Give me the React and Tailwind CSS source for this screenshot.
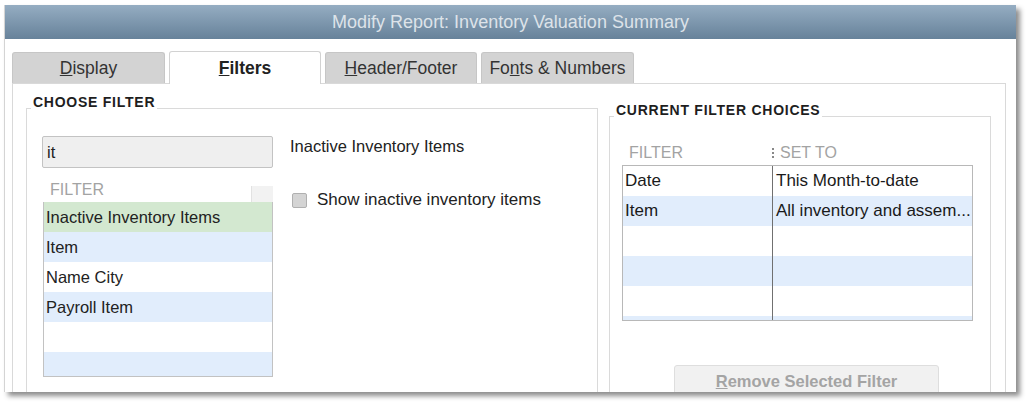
import React from "react";

const font = { fontFamily: '"Liberation Sans", Arial, sans-serif' };

function Tab({ children, active, w }) {
  if (active) {
    return (
      <div
        className={`${w} h-[33px] -mb-px mt-[-1px] bg-white border border-b-0 border-[#d2d2d2] rounded-t-[3px] flex items-center justify-center text-[17.5px] font-bold text-[#222] relative z-10`}
      >
        {children}
      </div>
    );
  }
  return (
    <div
      className={`${w} h-[31px] bg-[#d3d3d3] border border-b-0 border-[#c6c6c6] rounded-t-[3px] flex items-center justify-center text-[17.5px] text-[#333]`}
    >
      {children}
    </div>
  );
}

function GroupLabel({ children }) {
  return (
    <div className="absolute left-[4px] top-[-15px] px-[2px] bg-white text-[14px] leading-[16px] font-bold tracking-[0.75px] text-[#1e1e1e]">
      {children}
    </div>
  );
}

export default function App() {
  const filterRows = [
    { name: "Inactive Inventory Items", bg: "bg-[#d3e8d0]" },
    { name: "Item", bg: "bg-[#e1edfc]" },
    { name: "Name City", bg: "bg-white" },
    { name: "Payroll Item", bg: "bg-[#e1edfc]" },
    { name: "", bg: "bg-white" },
    { name: "", bg: "bg-[#e1edfc]" },
  ];

  const choices = [
    ["Date", "This Month-to-date"],
    ["Item", "All inventory and assem..."],
    ["", ""],
    ["", ""],
    ["", ""],
  ];

  return (
    <div className="w-[1027px] h-[404px] bg-white pt-[5px] pl-[4px]" style={font}>
      <div className="w-[1012px] h-[387px] overflow-hidden flex flex-col bg-white border-l border-[#d4d4d4] shadow-[4px_4px_5px_rgba(0,0,0,0.45)]">
        {/* title bar */}
        <div className="h-[34px] shrink-0 flex items-center justify-center bg-gradient-to-b from-[#95adc2] to-[#67829a] text-[18px] text-[#dde3e9]">
          Modify Report: Inventory Valuation Summary
        </div>

        <div className="flex-1 pl-[7px] pr-[10px] pt-[13px] flex flex-col">
          {/* tabs */}
          <div className="flex gap-[4px] items-end">
            <Tab w="w-[153px]">
              <span><u>D</u>isplay</span>
            </Tab>
            <Tab w="w-[152px]" active>
              <span><u>F</u>ilters</span>
            </Tab>
            <Tab w="w-[152px]">
              <span><u>H</u>eader/Footer</span>
            </Tab>
            <Tab w="w-[153px]">
              <span>Fo<u>n</u>ts &amp; Numbers</span>
            </Tab>
          </div>

          {/* panel */}
          <div className="border border-[#d9d9d9] h-[400px] flex items-start pl-[13px] pr-[13px] gap-[11px]">
            {/* choose filter */}
            <div className="relative mt-[24px] w-[572px] h-[400px] border border-[#dadada] pt-[27px] pl-[15px] flex gap-[17px]">
              <GroupLabel>CHOOSE FILTER</GroupLabel>
              <div className="w-[231px] flex flex-col">
                <div className="h-[32px] bg-[#efefef] border border-[#c3c3c3] rounded-[2px] flex items-center px-[4px] text-[16.5px] text-[#222]">
                  it
                </div>
                <div className="mt-[9px] h-[25px] flex items-end relative">
                  <span className="pl-[8px] pb-[1px] text-[16px] text-[#a3a3a3] leading-[22px]">
                    FILTER
                  </span>
                  <div className="ml-auto w-[22px] h-[16px] bg-[#f2f2f2] border-l border-[#e2e2e2]"></div>
                </div>
                <div className="border border-[#c2c2c2] border-t-0 flex flex-col ml-[1px]">
                  {filterRows.map((r, i) => (
                    <div
                      key={i}
                      className={`${i === 5 ? "h-[24px]" : "h-[30px]"} ${r.bg} flex items-center pl-[2px] text-[16.5px] text-[#222] whitespace-nowrap`}
                    >
                      {r.name}
                    </div>
                  ))}
                </div>
              </div>
              <div className="flex flex-col text-[16.5px] text-[#222]">
                <div className="leading-[20px]">Inactive Inventory Items</div>
                <label className="mt-[34px] flex items-center leading-[20px] pl-[2px] text-[17px]">
                  <span className="w-[15px] h-[15px] bg-[#d4d4d4] border border-[#b0b0b0] rounded-[2px]"></span>
                  <span className="ml-[10px]">Show inactive inventory items</span>
                </label>
              </div>
            </div>

            {/* current filter choices */}
            <div className="relative mt-[32px] w-[382px] h-[400px] border border-[#dadada] pt-[23px] pl-[12px] flex flex-col">
              <GroupLabel>CURRENT FILTER CHOICES</GroupLabel>
              <div className="w-[351px] h-[25px] flex items-center text-[16px] text-[#a3a3a3]">
                <div className="w-[151px] pl-[7px]">FILTER</div>
                <div className="flex items-center">
                  <span className="flex flex-col gap-[2px] mr-[6px] -ml-[1px]">
                    <span className="w-[2px] h-[2px] bg-[#888]"></span>
                    <span className="w-[2px] h-[2px] bg-[#888]"></span>
                    <span className="w-[2px] h-[2px] bg-[#888]"></span>
                  </span>
                  SET TO
                </div>
              </div>
              <div className="w-[351px] h-[156px] border border-[#b8b8b8] overflow-hidden relative">
                {choices.map((c, i) => (
                  <div
                    key={i}
                    className={`h-[30px] flex text-[17px] text-[#1a1a1a] ${i % 2 === 1 ? "bg-[#e1edfc]" : "bg-white"}`}
                  >
                    <div className="w-[150px] pl-[2px] flex items-center border-r border-[#707070]">
                      {c[0]}
                    </div>
                    <div className="flex-1 pl-[3px] flex items-center whitespace-nowrap">
                      {c[1]}
                    </div>
                  </div>
                ))}
                <div className="h-[30px] flex bg-[#e1edfc]">
                  <div className="w-[150px] border-r border-[#707070]"></div>
                </div>
              </div>
              <button className="mt-[44px] ml-[52px] w-[265px] h-[36px] bg-[#f1f1f1] border border-[#dedede] rounded-[3px] flex justify-center pt-[7px] text-[16.5px] leading-[17px] font-bold text-[#a4a4a4]">
                <span><u>R</u>emove Selected Filter</span>
              </button>
            </div>
          </div>
        </div>
      </div>
    </div>
  );
}
